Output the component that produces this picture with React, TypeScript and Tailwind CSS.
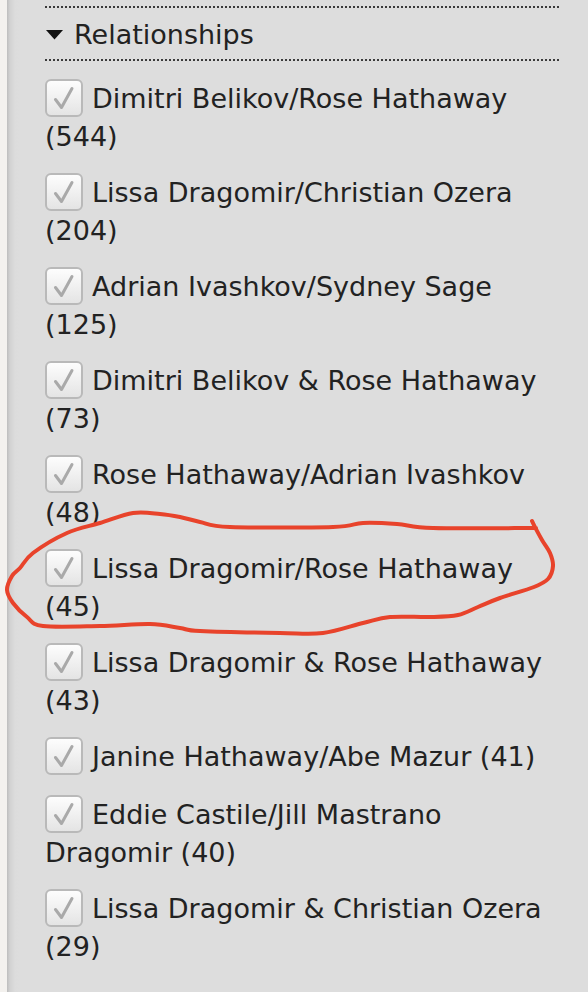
import React from "react";

const items: [string, number][] = [
  ["Dimitri Belikov/Rose Hathaway", 544],
  ["Lissa Dragomir/Christian Ozera", 204],
  ["Adrian Ivashkov/Sydney Sage", 125],
  ["Dimitri Belikov & Rose Hathaway", 73],
  ["Rose Hathaway/Adrian Ivashkov", 48],
  ["Lissa Dragomir/Rose Hathaway", 45],
  ["Lissa Dragomir & Rose Hathaway", 43],
  ["Janine Hathaway/Abe Mazur", 41],
  ["Eddie Castile/Jill Mastrano Dragomir", 40],
  ["Lissa Dragomir & Christian Ozera", 29],
];

const loopPts: [number, number][] = [
  [532, 521], [536, 529], [542, 540], [550, 553], [553, 566], [548, 579], [534, 587],
  [500, 598], [478, 607], [458, 615], [430, 617], [390, 617], [363, 623], [323, 633],
  [280, 633], [200, 631], [180, 628], [150, 624], [100, 626], [43, 626], [27, 617],
  [13, 603], [7, 590], [12, 576], [20, 568], [33, 553], [67, 533], [100, 523],
  [133, 513], [160, 514], [180, 517], [200, 522], [230, 527], [333, 527], [363, 523],
  [397, 524], [433, 528], [536, 528],
];

function smoothPath(p: [number, number][]) {
  let d = `M ${p[0][0]} ${p[0][1]}`;
  for (let i = 0; i < p.length - 1; i++) {
    const p0 = p[i - 1] || p[i];
    const p1 = p[i];
    const p2 = p[i + 1];
    const p3 = p[i + 2] || p2;
    const c1x = p1[0] + (p2[0] - p0[0]) / 6;
    const c1y = p1[1] + (p2[1] - p0[1]) / 6;
    const c2x = p2[0] - (p3[0] - p1[0]) / 6;
    const c2y = p2[1] - (p3[1] - p1[1]) / 6;
    d += ` C ${c1x.toFixed(1)} ${c1y.toFixed(1)} ${c2x.toFixed(1)} ${c2y.toFixed(1)} ${p2[0]} ${p2[1]}`;
  }
  return d;
}

function Checkbox() {
  return (
    <span className="inline-block align-top mt-[-1px] mr-[9px] w-[38px] h-[38px] rounded-[6px] border-2 border-[#b9b9b9] bg-[linear-gradient(to_bottom,#fdfdfd,#e4e4e4)]">
      <svg width="34" height="34" viewBox="0 0 34 34" className="block">
        <path d="M8.5 18.5 L14.5 26.5 L25 7.5" fill="none" stroke="#a9a9a9" strokeWidth="3" strokeLinecap="round" strokeLinejoin="round" />
      </svg>
    </span>
  );
}

function Dots() {
  return <div className="h-[2px] bg-[repeating-linear-gradient(to_right,#3a3a3a_0px,#3a3a3a_2px,transparent_2px,transparent_4px)]" />;
}

export default function App() {
  return (
    <div className="relative flex h-[992px] w-full overflow-hidden" style={{ fontFamily: '"DejaVu Sans", sans-serif' }}>
      <div className="w-[7px] shrink-0 bg-[#f3f1ee]" />
      <div className="flex-1 bg-[linear-gradient(to_right,#bdbdbd_0px,#d2d2d2_3px,#dcdcdc_8px,#dddddd_12px)] pl-[38px] pr-[27px] pt-[6px] text-[#222222]">
        <Dots />
        <div className="mt-[8px] flex h-[38px] items-center">
          <svg width="18" height="10" viewBox="0 0 18 10" className="ml-[1px] mr-[10px]">
            <path d="M0 0 L17 0 L8.5 9.5 Z" fill="#111" />
          </svg>
          <span className="text-[27px] leading-[38px]">Relationships</span>
        </div>
        <div className="mt-[5px]">
          <Dots />
        </div>
        <div className="mt-[19px] flex flex-col gap-[18px]">
          {items.map(([name, n]) => (
            <div key={name} className="min-h-[40px] text-[27px] leading-[38px]">
              <Checkbox />
              {name} ({n})
            </div>
          ))}
        </div>
      </div>
      <svg className="pointer-events-none absolute left-0 top-0" width="588" height="992" viewBox="0 0 588 992">
        <path d={smoothPath(loopPts)} fill="none" stroke="#e8432b" strokeWidth="4" strokeLinecap="round" strokeLinejoin="round" />
      </svg>
    </div>
  );
}
